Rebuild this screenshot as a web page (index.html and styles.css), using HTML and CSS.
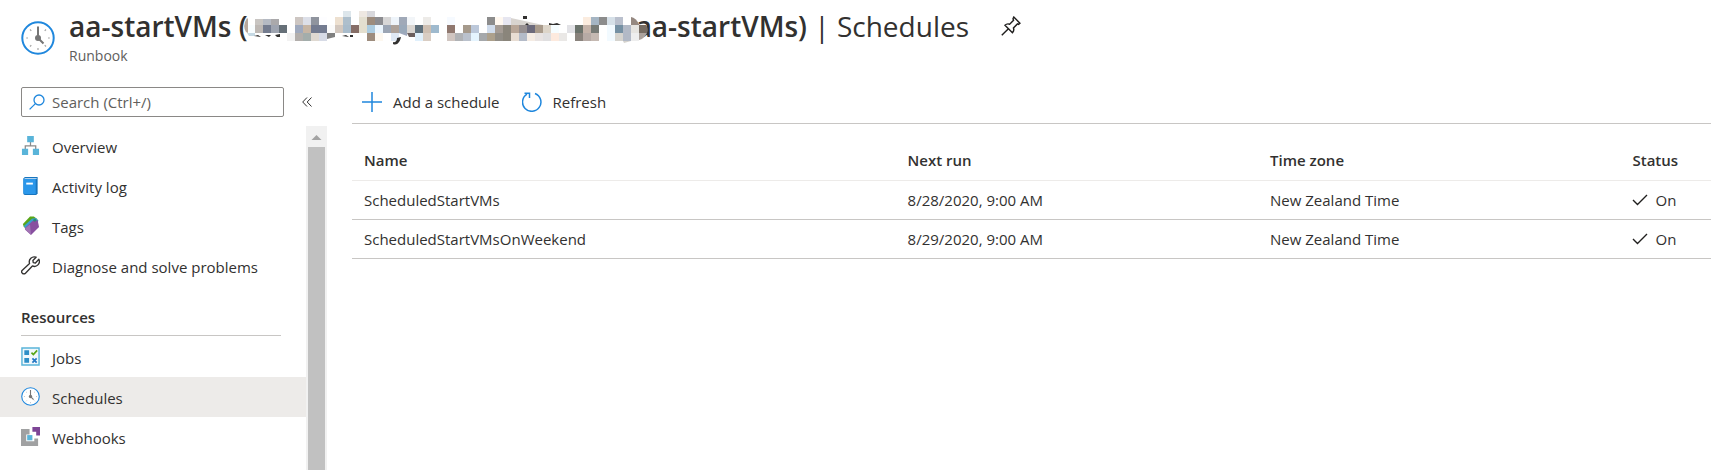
FILE: index.html
```html
<!DOCTYPE html>
<html lang="en">
<head>
<meta charset="utf-8">
<title>aa-startVMs | Schedules</title>
<link rel="stylesheet" href="styles.css">
</head>
<body>
<svg class="defs" aria-hidden="true">
  <symbol id="clock" viewBox="0 0 34 34">
    <circle cx="17" cy="17" r="15.7" fill="#fff" stroke="#1f87dd" stroke-width="2"/>
    <path d="M17 5.500V17l5.500 5.500" fill="none" stroke="#767676" stroke-width="2"/>
    <circle cx="17" cy="17" r="3" fill="#767676"/>
    <path d="M25 8.500l-1.300 1.300M9 8.500l1.300 1.300M28.800 17H27M5.200 17H7M17 27v2M9 25.500l1.300-1.300M25 25.500l-1.300-1.300" stroke="#a5a5a5" stroke-width="1.200"/>
  </symbol>
  <symbol id="check" viewBox="0 0 16 12">
    <path d="M1 6l4.500 4.500L15 1" fill="none" stroke="#201f1e" stroke-width="1.400"/>
  </symbol>
</svg>
<header class="blade-header">
  <svg class="blade-icon"><use href="#clock"/></svg>
  <div class="heading">
    <div class="title-row">
      <h1 class="title"><strong>aa-startVMs (</strong><span class="redacted"><svg class="mosaic" id="mosaic" viewBox="240 8 416 40" aria-hidden="true"></svg></span><strong>aa-startVMs)</strong> | Schedules</h1>
      <button class="pin" type="button" aria-label="Pin">
        <svg viewBox="0 0 18 18" fill="none" stroke="#201f1e" stroke-width="1.300"><path d="M11.500 1l5.500 5.500-1.200 1-1-.4-3.600 3.600c.6 1.700.1 3.300-.9 4.300L3.600 8.300c1.200-1.200 2.600-1.500 4.200-.9l3.500-3.500-.5-1.400zM6.900 11.300L.7 17.400"/></svg>
      </button>
    </div>
    <p class="subtitle">Runbook</p>
  </div>
</header>
<div class="body">
  <aside class="sidebar">
    <div class="search-row">
      <label class="search">
        <svg viewBox="0 0 16 16" fill="none" stroke="#1f87dd" stroke-width="1.300"><circle cx="10" cy="6" r="5"/><path d="M6.400 9.600L.6 15.400"/></svg>
        <input type="text" placeholder="Search (Ctrl+/)" aria-label="Search (Ctrl+/)">
      </label>
      <button class="collapse" type="button" aria-label="Collapse menu">
        <svg viewBox="0 0 10 10" fill="none" stroke="#323130" stroke-width="1"><path d="M5 .5L.7 5 5 9.500M9.500.5L5.200 5l4.300 4.500"/></svg>
      </button>
    </div>
    <div class="menu-wrap">
      <nav class="menu">
        <a class="item" href="#"><svg viewBox="0 0 19 20"><path d="M9.500 6v4M4 14v-3.500h11V14" fill="none" stroke="#8a8a8a" stroke-width="1.300"/><path d="M6 0h7v6.500H6zM.5 13.500H7V20H.5zM12 13.500h6.500V20H12z" fill="#59b4d9"/></svg>Overview</a>
        <a class="item" href="#"><svg viewBox="0 0 19 20"><path d="M3.500 1H17v17.500L15.500 20H3.500A1.500 1.500 0 0 1 2 18.500v-16z" fill="#1875be"/><path d="M3 3h12v16H3.500L2 18V3z" fill="#2b97ea"/><path d="M3.500 2H16v1H3z" fill="#e3effa"/><path d="M5 7h7v2H5z" fill="#fff"/></svg>Activity log</a>
        <a class="item" href="#"><svg viewBox="0 0 19 20"><path d="M1.500 8.500L9 .5h4l4 3-10 11-4.500-3z" fill="#58a618"/><path d="M2.500 10.500L11 3l4-1 3 3-9 11-5-3z" fill="#3a9fd0"/><path d="M3.500 13L12 5l5-.5 1.500 7L10 20l-6-5.500z" fill="#8850a0"/><path d="M4 13l5-4 1 10.500-6-5z" fill="#a274b4"/><circle cx="14" cy="4.500" r="1.500" fill="#2c8878"/></svg>Tags</a>
        <a class="item" href="#"><svg viewBox="0 0 20 20"><path d="M18.800 3.500a5.200 5.200 0 0 1-6.800 7l-7.300 7.700a2.300 2.300 0 0 1-3.300-3.300L9 7.800a5.200 5.200 0 0 1 6.900-6.500L12.500 4.700l.4 2.300 2.300.4z" fill="#fff" stroke="#323130" stroke-width="1.400" stroke-linejoin="round"/></svg>Diagnose and solve problems</a>
        <h2 class="section">Resources</h2>
        <a class="item" href="#"><svg viewBox="0 0 20 20"><path d="M1 1h18v18H1z" fill="#f1f8fc" stroke="#59b4d9" stroke-width="1.500"/><path d="M3.500 3.500h5v5h-5zM3.500 11.500h5v5h-5z" fill="#2f8fc7"/><path d="M11 6l2 2 4-4.500" fill="none" stroke="#58a618" stroke-width="1.800"/><path d="M12 12l4.500 4.500M16.500 12L12 16.500" stroke="#2578c4" stroke-width="1.800"/></svg>Jobs</a>
        <a class="item selected" href="#" aria-current="page"><svg viewBox="0 0 34 34"><use href="#clock"/></svg>Schedules</a>
        <a class="item" href="#"><svg viewBox="0 0 20 20"><path d="M0 2h9v6H5.500v7H14v-3h4v8H0z" fill="#a0a1a2"/><path d="M12 0h8v9h-4V5h-4z" fill="#7d4596"/><path d="M6.500 8.500h5.500V14H6.500z" fill="#59b4d9"/></svg>Webhooks</a>
      </nav>
      <div class="scrollbar" aria-hidden="true"><svg viewBox="0 0 21 21"><path d="M5.500 14L10.500 9l5 5z" fill="#a3a3a3"/></svg><div class="thumb"></div></div>
    </div>
  </aside>
  <main class="content">
    <div class="toolbar">
      <button type="button"><svg viewBox="0 0 20 20" fill="none" stroke="#1f87dd" stroke-width="1.500"><path d="M10 0v20M0 10h20"/></svg>Add a schedule</button>
      <button type="button"><svg viewBox="0 0 20 20" fill="none" stroke="#1f87dd" stroke-width="1.500"><path d="M13 1.500a9.200 9.200 0 1 1-8 .7M2.500 1.200h5v4.800"/></svg>Refresh</button>
    </div>
    <table class="grid">
      <thead><tr><th class="name">Name</th><th class="mid">Next run</th><th class="mid">Time zone</th><th>Status</th></tr></thead>
      <tbody>
        <tr><td>ScheduledStartVMs</td><td>8/28/2020, 9:00 AM</td><td>New Zealand Time</td><td><span class="status"><svg><use href="#check"/></svg>On</span></td></tr>
        <tr><td>ScheduledStartVMsOnWeekend</td><td>8/29/2020, 9:00 AM</td><td>New Zealand Time</td><td><span class="status"><svg><use href="#check"/></svg>On</span></td></tr>
      </tbody>
    </table>
  </main>
</div>
<script src="mosaic.js"></script>
</body>
</html>
```
FILE: styles.css
```css
* { box-sizing: border-box; }
body {
  margin: 0;
  min-height: 100vh;
  display: flex;
  flex-direction: column;
  overflow: hidden;
  background: #fff;
  color: #323130;
  font: 15px/20px "Open Sans", "Noto Sans", sans-serif;
}
button { border: 0; padding: 0; background: none; color: inherit; font: inherit; }
.defs { position: absolute; width: 0; height: 0; }

.blade-header { display: flex; gap: 14px; height: 87px; padding: 7px 21px 0; }
.blade-icon { width: 34px; height: 34px; margin-top: 14px; }
.title-row { display: flex; align-items: center; gap: 32px; }
.title { margin: 0; font-size: 28px; line-height: 38px; font-weight: 400; white-space: nowrap; }
.title strong { font-weight: 600; }
.redacted { display: inline-block; position: relative; width: 388px; height: 20px; }
.mosaic { position: absolute; left: -9px; top: -8px; width: 416px; height: 40px; }
.pin svg { display: block; width: 20px; height: 20px; }
.subtitle { margin: 0; padding-top: 1px; font-size: 14px; color: #605e5c; }

.body { display: flex; flex: 1; }
.sidebar { display: flex; flex-direction: column; width: 327px; }
.search-row { display: flex; align-items: center; gap: 18px; padding-left: 21px; height: 30px; }
.search {
  display: flex; align-items: center; gap: 7px;
  width: 263px; height: 30px; padding: 0 7px;
  border: 1px solid #8a8886; border-radius: 2px;
}
.search svg { width: 16px; height: 16px; }
.search input { flex: 1; min-width: 0; border: 0; padding: 0; outline: 0; font: inherit; background: none; }
.search input::placeholder { color: #605e5c; opacity: 1; }
.collapse svg { display: block; width: 10px; height: 10px; }
.menu-wrap { display: flex; flex: 1; margin-top: 9px; }
.menu { flex: 1; }
.item {
  display: flex; align-items: center; gap: 12px;
  height: 40px; padding: 1px 0 0 21px;
  color: inherit; text-decoration: none;
}
.item svg { width: 19px; height: 19px; margin-bottom: 3px; }
.item.selected { background: #edebe9; }
.section {
  margin: 15px 25px 1px 21px; padding: 6px 0 8px;
  border-bottom: 1px solid #c8c6c4;
  font-size: 15px; line-height: 20px; font-weight: 600;
}
.scrollbar { display: flex; flex-direction: column; width: 21px; background: #f1f1f1; }
.scrollbar svg { width: 21px; height: 21px; }
.thumb { flex: 1; margin: 0 2px; background: #c1c1c1; }

.content { flex: 1; margin-left: 25px; }
.toolbar { display: flex; align-items: center; gap: 22px; height: 37px; padding: 0 10px 7px; border-bottom: 1px solid #c8c6c4; }
.toolbar button { display: flex; align-items: center; gap: 11px; }
.toolbar svg { width: 20px; height: 20px; }
.grid { width: 100%; table-layout: fixed; border-collapse: collapse; }
.grid th, .grid td { padding: 0 0 0 12px; text-align: left; white-space: nowrap; }
.grid th { height: 56px; padding-top: 16px; font-weight: 600; border-bottom: 1px solid #edebe9; }
.grid td { height: 39px; border-bottom: 1px solid #c8c6c4; }
.grid .name { width: 40%; }
.grid .mid { width: 26.67%; }
.status { display: flex; align-items: center; gap: 7px; }
.status svg { width: 16px; height: 12px; }
```
FILE: mosaic.js
```js
// Pixelated strip that hides the account name: [x, y, colours of consecutive 8px cells]
const rows = [
  [344, 10, "dde6eb - eee8e2 d8d8dc"],
  [256, 18, "c8c5c2 b5bac3 aaa9ab"],
  [296, 16, "cdc6c2 dcdfe8 8f949e fdfdff fff ede0d0 aebfcc fff e3dfd0 9d8c7d 8c8c90 d7d6d6 eef4fa a0a9b8 f2f5f8 fff edebe8"],
  [448, 16, "f6faff fff fff fff fff 8c8c8c fff8f0 e6e6f0"],
  [584, 16, "fbecdf a5b5c3 8c8c8c d6e0e8 bac0cd fff"],
  [248, 24, "f8fdff bdb8b4 747c8f 9ea4b0 667078 fff 9fa9bd c6b5a4 737b90 737b90 fbfbfb d3c8bf a9bccb 866e67 e3dfcf accce0 ecf6fe 9ba5b4 ada29a 9aa9ba dad6d2 5f707c cebfb2 9fbace fff 90786f fff a69a8c bcc8da fff d0dcec a59c95 8a857b b8a698 968f90 6c6a7b a99b8c ddd5c9 f6fdff fff e2e2e6 6b736c c4b3a9 777b76 fff f2faff 7590a3 b2b9c6 e6e4e0"],
  [288, 32, "f2f2f2 b2aeab a3adab dfd9d1 d7dbe6"],
  [368, 32, "9d8c7d fdf8f0 fff dfe9f5"],
  [416, 32, "e0f0fc d9cdc3 fff fff d0c5c0 b0b2b5 bac1cc e5f4fe a5a8ab aca08c 918d86 8a857b e8ddd3 b4bbc8 f5ece4 e8e3e2 e0dfe0 fdeade eae8e6 fff 8a837d b6aaa5 c5b9b2 fff f2faff d5d3ce b2b9c6 eee"]
];
// Rounded ends and brush edges: [colour, path]
const edges = [
  ["#b8a89c", "M248 17q-5 8-1 14l2 1v-14z"],
  ["#c5d9e4", "M248 32h8v3h-6z"],
  ["#323130", "M255 35l4-1 3 2zM266 34h6l-2 2zM276 34l5-1v3h-3zM343 35l4-1 3 2zM351 34h3v2h-3z"],
  ["#808080", "M328 32h8v4l-8 2z"],
  ["#9fa9bd", "M400 32h8v3l-8-3z"],
  ["#6c5f5e", "M408 32h8v4h-6z"],
  ["#323130", "M398 37l4-1c-1 5-4 9-8 7v-2c3 1 4-2 4-4z"],
  ["#d8d4d0", "M512 17l32 7h-32z"],
  ["#323130", "M524 15h4v3h-4zM528 22l2 2h-4zM550 24v-2l4 1 4-1 4 2z"],
  ["#958880", "M632 16q5 1 8 7v1h-8z"],
  ["#766c62", "M640 24h7q3 4 1 8h-8z"],
  ["#aca39d", "M640 32h8q-3 6-8 7z"],
  ["#d5d3ce", "M624 40h8l-7 2z"]
];
const svg = document.getElementById("mosaic");
const add = (fill, d) => {
  const p = document.createElementNS("http://www.w3.org/2000/svg", "path");
  p.setAttribute("fill", fill);
  p.setAttribute("d", d);
  svg.append(p);
};
for (const [x, y, list] of rows) {
  const bottom = Math.ceil((y + 1) / 8) * 8;
  list.split(" ").forEach((c, i) => {
    if (c !== "-") add("#" + c, `M${x + i * 8} ${y}h8V${bottom}h-8z`);
  });
}
for (const [fill, d] of edges) add(fill, d);
```
